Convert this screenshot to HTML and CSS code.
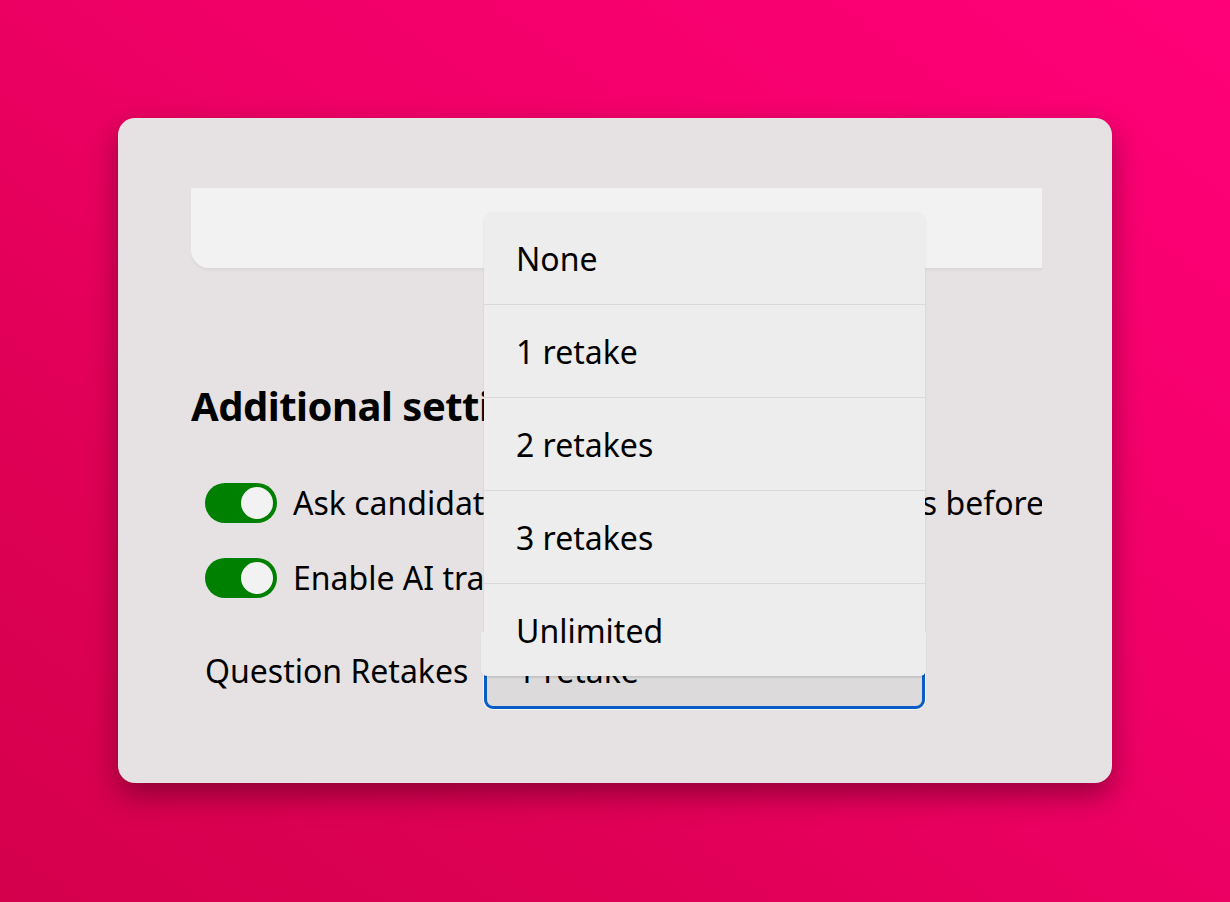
FILE: index.html
```html
<!DOCTYPE html>
<html lang="en">
<head>
<meta charset="utf-8">
<title>Additional settings</title>
<link rel="stylesheet" href="styles.css">
</head>
<body>
  <div class="card">
    <div class="viewport">
      <div class="top-panel"></div>
      <h2 class="heading">Additional settings</h2>
      <div class="toggle-row">
        <span class="toggle"><span class="knob"></span></span>
        <span class="row-text">Ask candidates to preview all their answers before submitting</span>
      </div>
      <div class="toggle-row">
        <span class="toggle"><span class="knob"></span></span>
        <span class="row-text">Enable AI transcription</span>
      </div>
      <div class="select-row">
        <span class="select-label">Question Retakes</span>
        <div class="select-wrap">
          <div class="select">1 retake</div>
          <ul class="dropdown">
            <li class="option">None</li>
            <li class="option">1 retake</li>
            <li class="option">2 retakes</li>
            <li class="option">3 retakes</li>
            <li class="option last">Unlimited</li>
          </ul>
        </div>
      </div>
    </div>
  </div>
</body>
</html>
```

FILE: styles.css
```css
* { box-sizing: border-box; }

html, body {
  margin: 0;
  width: 1230px;
  height: 902px;
  overflow: hidden;
}

body {
  padding: 118px;
  background: linear-gradient(to bottom left, #ff0078 0%, #f10068 40%, #de0054 75%, #d4004c 100%);
  font-family: "Noto Sans", "Open Sans", sans-serif;
  color: #000;
}

.card {
  width: 994px;
  height: 665px;
  background: #e6e2e3;
  border-radius: 17px;
  box-shadow: 0 12px 28px rgba(70, 0, 25, 0.5);
  padding: 70px 70px 0 73px;
}

.viewport {
  width: 851px;
  height: 595px;
  overflow: hidden;
}

.top-panel {
  width: 880px;
  height: 80px;
  background: #f2f2f2;
  border-bottom-left-radius: 18px;
  box-shadow: 0 2px 3px rgba(0, 0, 0, 0.05);
}

.heading {
  margin: 114px 0 0;
  font-size: 40px;
  line-height: 48px;
  font-weight: 700;
  letter-spacing: -0.5px;
  white-space: nowrap;
}

.toggle-row {
  display: flex;
  align-items: center;
  gap: 16px;
  height: 40px;
  padding-left: 14px;
  margin-top: 35px;
  white-space: nowrap;
  font-size: 32px;
}

.heading + .toggle-row { margin-top: 53px; }

.toggle {
  flex: none;
  position: relative;
  width: 72px;
  height: 40px;
  border-radius: 20px;
  background: #008000;
}

.knob {
  position: absolute;
  top: 4px;
  right: 4px;
  width: 32px;
  height: 32px;
  border-radius: 50%;
  background: #f2f2f2;
}

.row-text { line-height: 40px; }

.select-row {
  display: flex;
  align-items: center;
  padding-left: 14px;
  margin-top: 33px;
  font-size: 32px;
  white-space: nowrap;
}

.select-label {
  width: 279px;
  flex: none;
}

.select-wrap {
  position: relative;
  width: 441px;
}

.select {
  height: 78px;
  border: 3px solid #0a5cc6;
  border-radius: 9px;
  background: #dcdadb;
  box-shadow: 0 0 0 1px #f5f4f4;
  padding-left: 30px;
  display: flex;
  align-items: center;
}

.dropdown {
  position: absolute;
  left: 0;
  bottom: 33px;
  width: 441px;
  margin: 0;
  padding: 0;
  list-style: none;
  background: #ededed;
  border-radius: 9px 9px 6px 6px;
  box-shadow: 0 1px 3px rgba(0, 0, 0, 0.08);
}

.dropdown::after {
  content: "";
  position: absolute;
  left: -3px;
  right: -1px;
  bottom: 0;
  height: 44px;
  background: #ededed;
  border-radius: 0 0 6px 6px;
  box-shadow: 0 2px 2px rgba(0, 0, 0, 0.06);
}

.option {
  height: 93px;
  border-bottom: 1px solid #d9d9d9;
  padding-left: 32px;
  display: flex;
  align-items: center;
  position: relative;
  z-index: 1;
}

.option.last {
  height: 92px;
  border-bottom: 0;
}
```
